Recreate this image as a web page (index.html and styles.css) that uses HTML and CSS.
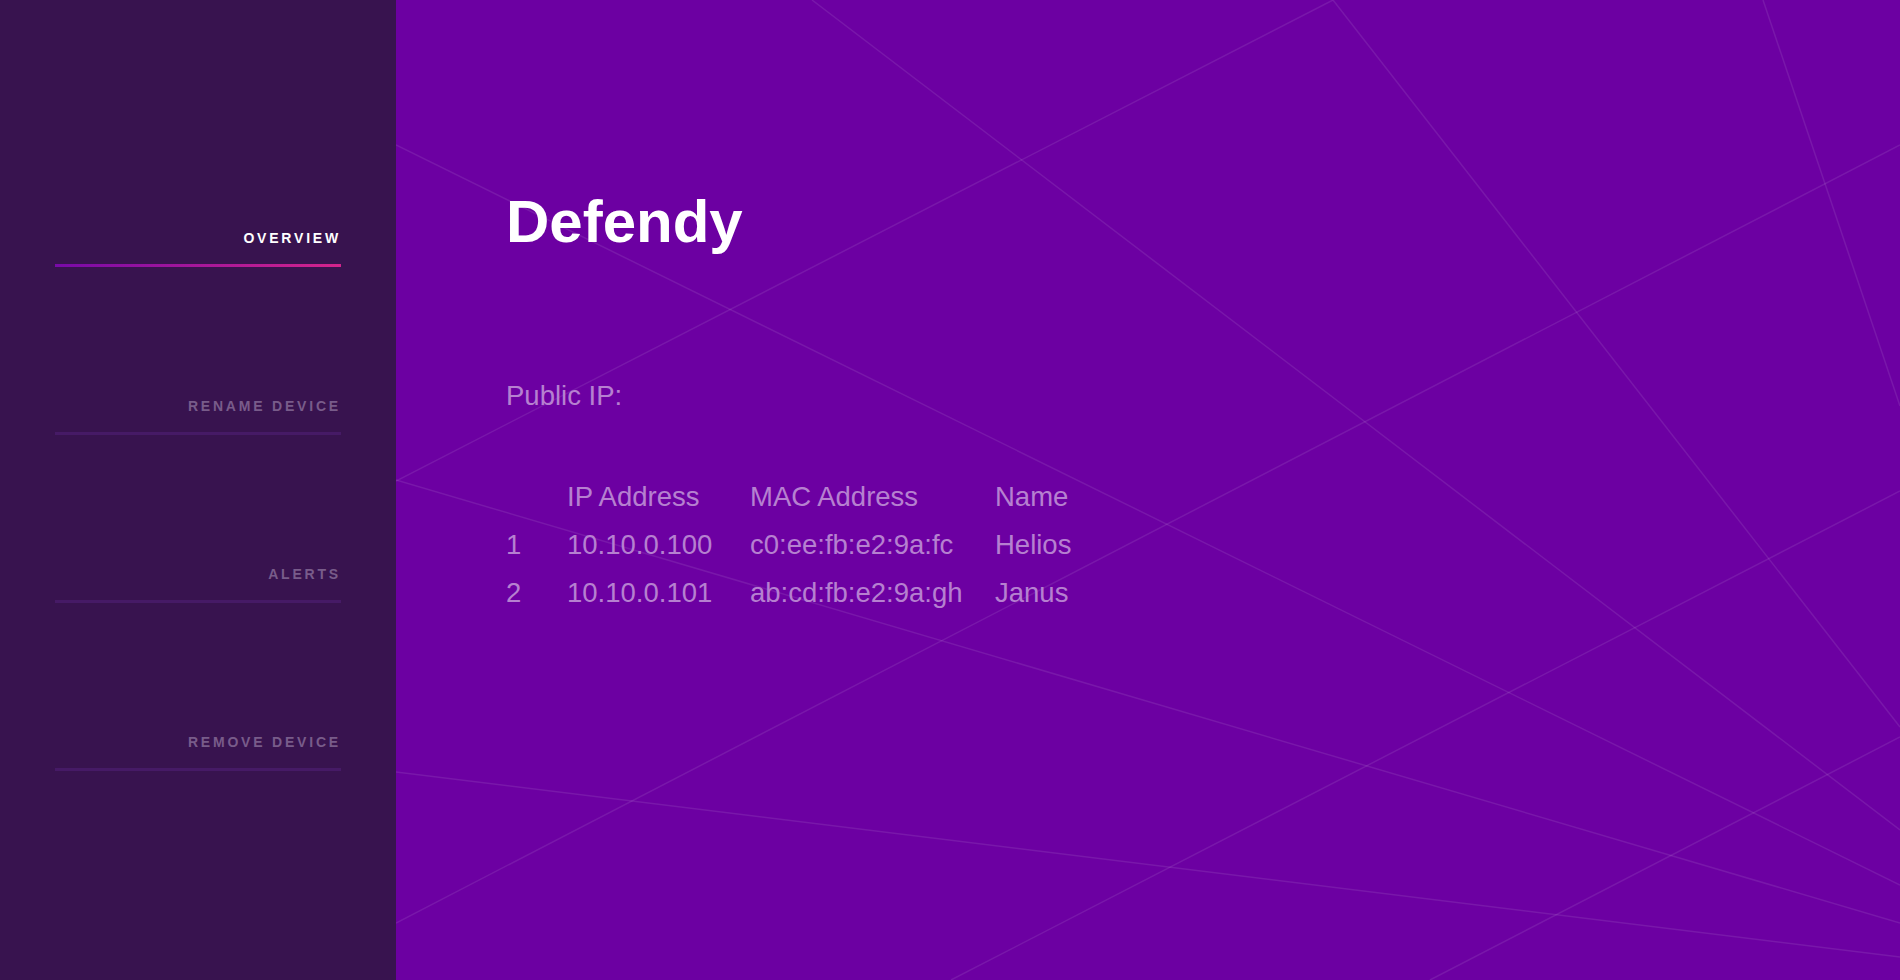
FILE: index.html
```html
<!DOCTYPE html>
<html lang="en">
<head>
<meta charset="utf-8">
<title>Defendy</title>
<link rel="stylesheet" href="styles.css">
</head>
<body>
<aside class="sidebar">
  <nav class="nav">
    <a class="nav-item active" href="#">Overview</a>
    <a class="nav-item" href="#">Rename Device</a>
    <a class="nav-item" href="#">Alerts</a>
    <a class="nav-item" href="#">Remove Device</a>
  </nav>
</aside>
<main class="main">
  <svg class="bg-lines" viewBox="396 0 1504 980" preserveAspectRatio="none" aria-hidden="true">
    <g stroke="rgba(255,255,255,0.09)" stroke-width="1.5" fill="none">
      <line x1="812" y1="0" x2="1900" y2="830"/>
      <line x1="1333" y1="0" x2="1900" y2="727"/>
      <line x1="1763" y1="0" x2="1900" y2="406"/>
      <line x1="396" y1="145" x2="1900" y2="885"/>
      <line x1="396" y1="481" x2="1333" y2="0"/>
      <line x1="396" y1="480" x2="1900" y2="923"/>
      <line x1="396" y1="923" x2="1900" y2="145"/>
      <line x1="951" y1="980" x2="1900" y2="491"/>
      <line x1="1430" y1="980" x2="1900" y2="737"/>
      <line x1="396" y1="772" x2="1900" y2="957"/>
    </g>
  </svg>
  <div class="content">
    <h1 class="title">Defendy</h1>
    <p class="public-ip">Public IP:</p>
    <table class="devices">
      <colgroup>
        <col class="c-num">
        <col class="c-ip">
        <col class="c-mac">
        <col class="c-name">
      </colgroup>
      <thead>
        <tr><th></th><th>IP Address</th><th>MAC Address</th><th>Name</th></tr>
      </thead>
      <tbody>
        <tr><td>1</td><td>10.10.0.100</td><td>c0:ee:fb:e2:9a:fc</td><td>Helios</td></tr>
        <tr><td>2</td><td>10.10.0.101</td><td>ab:cd:fb:e2:9a:gh</td><td>Janus</td></tr>
      </tbody>
    </table>
  </div>
</main>
</body>
</html>
```

FILE: styles.css
```css
* { box-sizing: border-box; }

html, body {
  margin: 0;
  height: 100%;
}

body {
  display: flex;
  height: 980px;
  overflow: hidden;
  font-family: "Liberation Sans", Arial, sans-serif;
  background: #6c00a2;
}

.sidebar {
  width: 396px;
  flex: 0 0 396px;
  background: #38134f;
  padding: 230px 55px 0 55px;
}

.nav {
  display: flex;
  flex-direction: column;
  gap: 131px;
}

.nav-item {
  position: relative;
  display: block;
  font-size: 14px;
  line-height: 17px;
  font-weight: bold;
  letter-spacing: 2.8px;
  text-transform: uppercase;
  text-align: right;
  color: #785c8a;
  text-decoration: none;
  padding-bottom: 17px;
  border-bottom: 3px solid #461a66;
}

.nav-item.active {
  color: #ffffff;
  border-bottom-color: transparent;
}

.nav-item.active::after {
  content: "";
  position: absolute;
  left: 0;
  right: 0;
  bottom: -3px;
  height: 3px;
  background: linear-gradient(90deg, #780aa8 0%, #d4248c 100%);
}

.main {
  position: relative;
  flex: 1;
  background: #6c00a2;
  overflow: hidden;
}

.bg-lines {
  position: absolute;
  left: 0;
  top: 0;
  width: 100%;
  height: 100%;
}

.content {
  position: relative;
  padding: 187px 0 0 110px;
}

.title {
  margin: 0;
  font-size: 60px;
  line-height: 69px;
  font-weight: bold;
  color: #ffffff;
}

.public-ip {
  margin: 124px 0 0 0;
  font-size: 27.5px;
  line-height: 32px;
  color: #b680d0;
}

.devices {
  margin-top: 61px;
  border-collapse: collapse;
  font-size: 27.5px;
  color: #b680d0;
  table-layout: fixed;
}

.c-num { width: 61px; }
.c-ip { width: 183px; }
.c-mac { width: 245px; }
.c-name { width: 120px; }

.devices th,
.devices td {
  padding: 0;
  height: 48px;
  line-height: 48px;
  text-align: left;
  font-weight: normal;
  white-space: nowrap;
  vertical-align: top;
}
```
